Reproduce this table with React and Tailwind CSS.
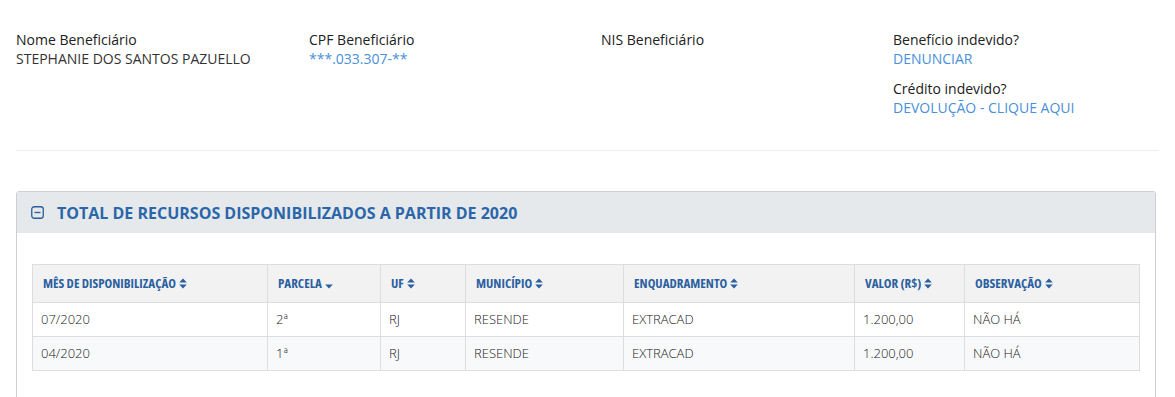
import React from 'react';

const cols = [
  { label: 'MÊS DE DISPONIBILIZAÇÃO', w: 'w-[235px]', sort: 'both' },
  { label: 'PARCELA', w: 'w-[113px]', sort: 'down' },
  { label: 'UF', w: 'w-[85px]', sort: 'both' },
  { label: 'MUNICÍPIO', w: 'w-[158px]', sort: 'both' },
  { label: 'ENQUADRAMENTO', w: 'w-[231px]', sort: 'both' },
  { label: 'VALOR (R$)', w: 'w-[110px]', sort: 'both' },
  { label: 'OBSERVAÇÃO', w: '', sort: 'both' },
];

const rows = [
  ['07/2020', '2ª', 'RJ', 'RESENDE', 'EXTRACAD', '1.200,00', 'NÃO HÁ'],
  ['04/2020', '1ª', 'RJ', 'RESENDE', 'EXTRACAD', '1.200,00', 'NÃO HÁ'],
];

function SortIcon({ dir }) {
  return (
    <svg width="8" height="11" viewBox="0 0 8 11" className="inline-block ml-[3px] -mt-[2px] fill-current">
      {dir === 'both' && <path d="M4 0.5 L7.8 4.5 L0.2 4.5 Z" />}
      <path d="M0.2 6.5 L7.8 6.5 L4 10.5 Z" />
    </svg>
  );
}

function Field({ label, children }) {
  return (
    <div>
      <div className="text-[14px] leading-[19px] font-medium text-[#212121]">{label}</div>
      <div className="text-[14px] leading-[19px]">{children}</div>
    </div>
  );
}

export default function App() {
  return (
    <div className="bg-white min-h-[397px] px-4 font-['Open_Sans',sans-serif] overflow-hidden">
      {/* Beneficiary details */}
      <div className="grid grid-cols-[293px_292px_292px_1fr] pt-[30px] pb-[33px] border-b border-[#eeeeee]">
        <Field label="Nome Beneficiário">
          <span className="text-[#333333]">STEPHANIE DOS SANTOS PAZUELLO</span>
        </Field>
        <Field label="CPF Beneficiário">
          <span className="text-[#4a90d9]">***.033.307-**</span>
        </Field>
        <Field label="NIS Beneficiário" />
        <div className="flex flex-col gap-[11px]">
          <Field label="Benefício indevido?">
            <span className="text-[#4a90d9]">DENUNCIAR</span>
          </Field>
          <Field label="Crédito indevido?">
            <span className="text-[#4a90d9]">DEVOLUÇÃO - CLIQUE AQUI</span>
          </Field>
        </div>
      </div>

      {/* Panel */}
      <div className="mt-[40px] mr-[3px] border border-[#cfcfcf] rounded-t-[3px] h-[220px]">
        <div className="h-[41px] bg-[#e6e9ec] flex items-center pl-[14px] gap-[13px]">
          <svg width="13" height="13" viewBox="0 0 13 13" className="text-[#2a5d9a]">
            <rect x="0.75" y="0.75" width="11.5" height="11.5" rx="2.5" fill="none" stroke="currentColor" strokeWidth="1.3" />
            <path d="M3.5 6.5 H9.5" stroke="currentColor" strokeWidth="1.3" />
          </svg>
          <span className="text-[16px] font-bold text-[#2a66a8]">
            TOTAL DE RECURSOS DISPONIBILIZADOS A PARTIR DE 2020
          </span>
        </div>

        <div className="px-[15px] pt-[31px]">
          <table className="w-full border-collapse border border-[#dddddd]">
            <thead>
              <tr className="bg-[#f2f2f2] h-[38px]">
                {cols.map((c) => (
                  <th
                    key={c.label}
                    className={`${c.w} border border-[#dddddd] text-left pl-[10px] text-[13px] font-bold text-[#2b5fa0] [font-stretch:75%]`}
                  >
                    {c.label}
                    <SortIcon dir={c.sort} />
                  </th>
                ))}
              </tr>
            </thead>
            <tbody>
              {rows.map((r, i) => (
                <tr key={i} className={`h-[34px] ${i % 2 ? 'bg-[#f8f9fa]' : 'bg-white'}`}>
                  {r.map((v, j) => (
                    <td key={j} className="border border-[#dddddd] pl-[8px] text-[13px] font-light text-[#222222]">
                      {v}
                    </td>
                  ))}
                </tr>
              ))}
            </tbody>
          </table>
        </div>
      </div>
    </div>
  );
}
